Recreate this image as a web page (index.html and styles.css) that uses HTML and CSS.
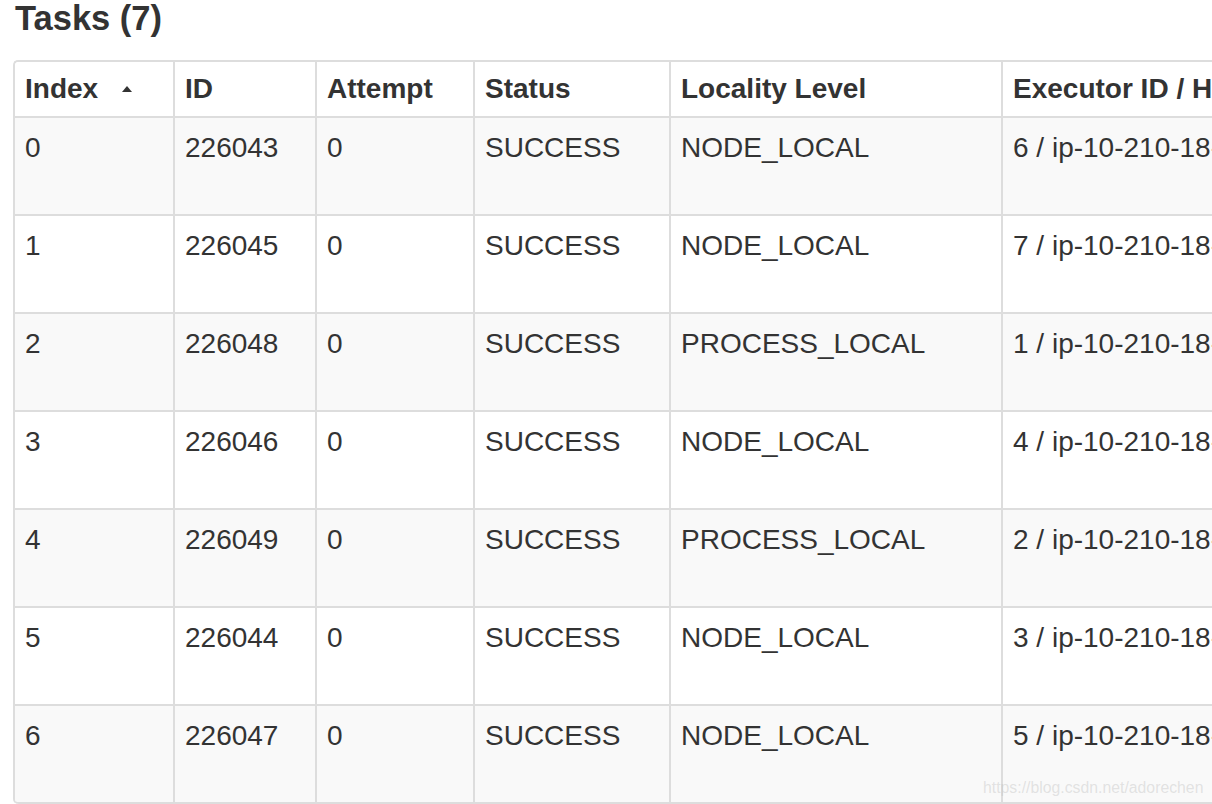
FILE: index.html
```html
<!DOCTYPE html>
<html>
<head>
<meta charset="utf-8">
<link rel="stylesheet" href="styles.css">
</head>
<body>
<div class="page">
  <h4 class="title">Tasks (7)</h4>
  <table class="tasks">
    <thead>
      <tr>
        <th class="c-index">Index <span class="sort-up"></span></th>
        <th class="c-id">ID</th>
        <th class="c-attempt">Attempt</th>
        <th class="c-status">Status</th>
        <th class="c-locality">Locality Level</th>
        <th class="c-exec">Executor ID / Host</th>
        <th class="c-more">Launch Time</th>
      </tr>
    </thead>
    <tbody>
      <tr><td>0</td><td>226043</td><td>0</td><td>SUCCESS</td><td>NODE_LOCAL</td><td>6 / ip-10-210-18-130.ec2.internal</td><td>2019/03/12 10:21:04</td></tr>
      <tr><td>1</td><td>226045</td><td>0</td><td>SUCCESS</td><td>NODE_LOCAL</td><td>7 / ip-10-210-18-141.ec2.internal</td><td>2019/03/12 10:21:04</td></tr>
      <tr><td>2</td><td>226048</td><td>0</td><td>SUCCESS</td><td>PROCESS_LOCAL</td><td>1 / ip-10-210-18-152.ec2.internal</td><td>2019/03/12 10:21:04</td></tr>
      <tr><td>3</td><td>226046</td><td>0</td><td>SUCCESS</td><td>NODE_LOCAL</td><td>4 / ip-10-210-18-163.ec2.internal</td><td>2019/03/12 10:21:04</td></tr>
      <tr><td>4</td><td>226049</td><td>0</td><td>SUCCESS</td><td>PROCESS_LOCAL</td><td>2 / ip-10-210-18-174.ec2.internal</td><td>2019/03/12 10:21:04</td></tr>
      <tr><td>5</td><td>226044</td><td>0</td><td>SUCCESS</td><td>NODE_LOCAL</td><td>3 / ip-10-210-18-185.ec2.internal</td><td>2019/03/12 10:21:04</td></tr>
      <tr><td>6</td><td>226047</td><td>0</td><td>SUCCESS</td><td>NODE_LOCAL</td><td>5 / ip-10-210-18-196.ec2.internal</td><td>2019/03/12 10:21:04</td></tr>
    </tbody>
  </table>
</div>
<div class="watermark">https://blog.csdn.net/adorechen</div>
</body>
</html>
```

FILE: styles.css
```css
html, body {
  margin: 0;
  padding: 0;
  background: #ffffff;
  overflow: hidden;
}

body {
  width: 1212px;
  height: 804px;
  position: relative;
  font-family: "Liberation Sans", Arial, Helvetica, sans-serif;
  color: #333333;
}

.page {
  padding: 0 0 0 13px;
}

.title {
  margin: 0 0 23px 2px;
  font-size: 34.5px;
  line-height: 37px;
  font-weight: bold;
  color: #333333;
}

.tasks {
  border-collapse: separate;
  border-spacing: 0;
  border-top: 2px solid #dddddd;
  border-left: 2px solid #dddddd;
  border-radius: 5px 0 0 5px;
  table-layout: fixed;
  width: 1500px;
  font-size: 28px;
  line-height: 39px;
}

.tasks th,
.tasks td {
  border-right: 2px solid #dddddd;
  border-bottom: 2px solid #dddddd;
  text-align: left;
  vertical-align: top;
  white-space: nowrap;
  overflow: hidden;
}

.tasks th {
  font-weight: bold;
  padding: 7px 10px 8px 10px;
  background: #ffffff;
}

.tasks td {
  padding: 10px 10px 47px 10px;
}

.tasks thead tr th:first-child {
  border-top-left-radius: 4px;
}

.tasks tbody tr:last-child td:first-child {
  border-bottom-left-radius: 4px;
}

.tasks tbody tr:nth-child(odd) td {
  background: #f9f9f9;
}

.c-index { width: 138px; }
.c-id { width: 120px; }
.c-attempt { width: 136px; }
.c-status { width: 174px; }
.c-locality { width: 310px; }
.c-exec { width: 420px; }
.c-more { width: 300px; }

.sort-up {
  display: inline-block;
  width: 0;
  height: 0;
  border-left: 5px solid transparent;
  border-right: 5px solid transparent;
  border-bottom: 6px solid #333333;
  margin-left: 16px;
  vertical-align: 6px;
}

.watermark {
  position: absolute;
  left: 983px;
  top: 778px;
  font-family: "Liberation Sans", Arial, sans-serif;
  font-size: 15.8px;
  line-height: 20px;
  color: rgba(190, 190, 190, 0.4);
  white-space: nowrap;
}
```
